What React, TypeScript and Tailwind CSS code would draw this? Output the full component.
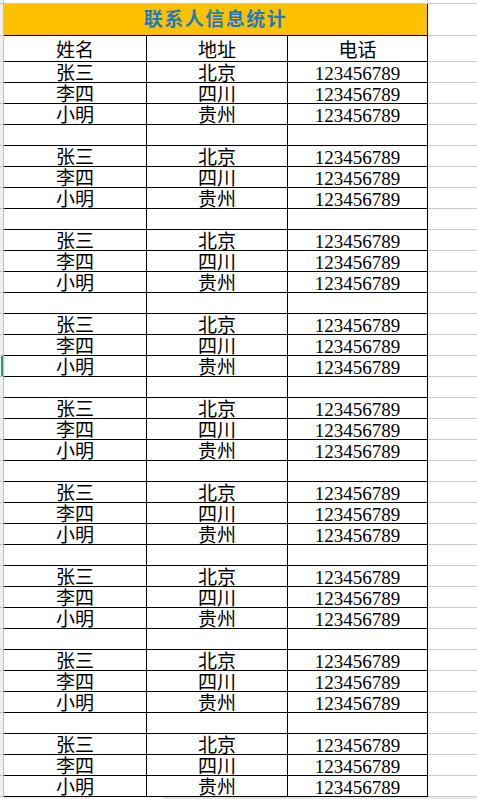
import * as React from 'react'

type Contact = {
  name: string
  addr: string
  tel: string
}

const people: Contact[] = [
  { name: '张三', addr: '北京', tel: '123456789' },
  { name: '李四', addr: '四川', tel: '123456789' },
  { name: '小明', addr: '贵州', tel: '123456789' },
]

const GROUPS = 9
const SELECTED_ROW = 14

const rows: (Contact | null)[] = []
for (let g = 0; g < GROUPS; g++) {
  rows.push(...people)
  if (g < GROUPS - 1) rows.push(null)
}

const font = { fontFamily: "'Liberation Serif', 'Noto Sans CJK SC', serif" }

function RowHead({ selected = false }: { selected?: boolean }) {
  return (
    <div className="flex w-[4px] shrink-0 justify-end border-r border-b border-[#b9c0d1] bg-[#eef0f4]">
      {selected && <div className="w-[2px] bg-[#21a366]" />}
    </div>
  )
}

function Cell({ width, children }: { width: string; children?: React.ReactNode }) {
  return (
    <div
      className={`${width} flex shrink-0 items-center justify-center border-r border-b border-black pt-[4px] text-[19px] leading-[16px] text-black`}
    >
      {children}
    </div>
  )
}

export default function App() {
  return (
    <div className="h-[799px] w-[477px] overflow-hidden bg-white" style={font}>
      {/* row above the table */}
      <div className="flex h-[4px]">
        <div className="w-[4px] shrink-0 border-r border-b border-[#b9c0d1] bg-[#eef0f4]" />
        <div className="w-[424px] shrink-0 border-r border-b border-[#c9ccd6]" />
        <div className="flex-1 border-b border-[#c9ccd6]" />
      </div>

      {/* title */}
      <div className="flex h-[32px]">
        <RowHead />
        <div className="flex w-[424px] shrink-0 items-center justify-center border-r border-b border-black bg-[#ffc000] pt-[1px] text-[19px] font-bold tracking-[1.5px] text-[#1b7cc4]">
          联系人信息统计
        </div>
        <div className="flex-1 border-b border-[#c9ccd6]" />
      </div>

      {/* column heads */}
      <div className="flex h-[26px]">
        <RowHead />
        <Cell width="w-[143px]">姓名</Cell>
        <Cell width="w-[141px]">地址</Cell>
        <Cell width="w-[140px]">电话</Cell>
        <div className="flex-1 border-b border-[#c9ccd6]" />
      </div>

      {rows.map((row, i) => (
        <div key={i} className="flex h-[21px]">
          <RowHead selected={i === SELECTED_ROW} />
          <Cell width="w-[143px]">{row?.name}</Cell>
          <Cell width="w-[141px]">{row?.addr}</Cell>
          <Cell width="w-[140px]">{row?.tel}</Cell>
          <div className="flex-1 border-b border-[#c9ccd6]" />
        </div>
      ))}

      {/* scroll bar strip */}
      <div className="flex h-[3px]">
        <div className="w-[90px] bg-[#f0f0f0]" />
        <div className="w-[73px] bg-white" />
        <div className="w-[147px] bg-[#e4e4e4]" />
        <div className="flex-1 bg-[#ebebeb]" />
      </div>
    </div>
  )
}
